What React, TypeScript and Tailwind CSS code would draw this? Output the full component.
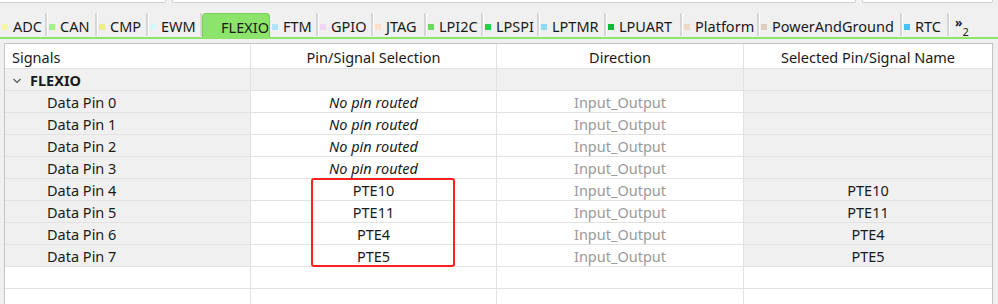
import React from "react";

type Tab = { label: string; sq: string; w: string; active?: boolean };

const tabs: Tab[] = [
  { label: "ADC", sq: "bg-[#f6f6a0]", w: "w-[47px]" },
  { label: "CAN", sq: "bg-[#a6f08a]", w: "w-[50px]" },
  { label: "CMP", sq: "bg-[#eeee7c]", w: "w-[51px]" },
  { label: "EWM", sq: "bg-[#d4f8f8]", w: "w-[54px]" },
  { label: "FLEXIO", sq: "bg-[#8de46a]", w: "w-[68px]", active: true },
  { label: "FTM", sq: "bg-[#b2e2fa]", w: "w-[48px]" },
  { label: "GPIO", sq: "bg-[#f2d4f6]", w: "w-[55px]" },
  { label: "JTAG", sq: "bg-[#fde0c8]", w: "w-[53px]" },
  { label: "LPI2C", sq: "bg-[#66dd55]", w: "w-[57px]" },
  { label: "LPSPI", sq: "bg-[#22d04a]", w: "w-[56px]" },
  { label: "LPTMR", sq: "bg-[#90d8f8]", w: "w-[67px]" },
  { label: "LPUART", sq: "bg-[#10b83a]", w: "w-[76px]" },
  { label: "Platform", sq: "bg-[#eed8c4]", w: "w-[77px]" },
  { label: "PowerAndGround", sq: "bg-[#e2ccbe]", w: "w-[143px]" },
  { label: "RTC", sq: "bg-[#4cc0f4]", w: "w-[47px]" },
];

type Row = { name: string; pin: string; sel: string };

const rows: Row[] = [
  { name: "Data Pin 0", pin: "", sel: "" },
  { name: "Data Pin 1", pin: "", sel: "" },
  { name: "Data Pin 2", pin: "", sel: "" },
  { name: "Data Pin 3", pin: "", sel: "" },
  { name: "Data Pin 4", pin: "PTE10", sel: "PTE10" },
  { name: "Data Pin 5", pin: "PTE11", sel: "PTE11" },
  { name: "Data Pin 6", pin: "PTE4", sel: "PTE4" },
  { name: "Data Pin 7", pin: "PTE5", sel: "PTE5" },
];

const grid = "grid grid-cols-[246px_246px_247px_1fr]";
const cell = "h-[22px] pt-[2px] border-b border-r border-[#e2e2e2] flex items-center";
const head = "h-[25px] pt-[3px] border-b border-[#e2e2e2] flex items-center";

export default function App() {
  return (
    <div className="relative w-[998px] h-[304px] overflow-hidden bg-[#f0f0f0] text-[14.5px] text-[#1a1a1a] font-['Noto_Sans',sans-serif] leading-none">
      {/* bottoms of the panels above */}
      <div className="flex h-[13px] items-start">
        <div className="w-[166px] h-[3px] bg-white border-b border-r border-[#cfcfcf] rounded-br-[2px]" />
        <div className="ml-[6px] w-[684px] h-[3px] bg-white border-b border-x border-[#cfcfcf] rounded-b-[2px]" />
        <div className="ml-[6px] w-[131px] h-[3px] bg-white border-b border-x border-[#cfcfcf] rounded-b-[2px]" />
      </div>

      {/* tab strip */}
      <div className="flex h-[24px] items-stretch">
        {tabs.map((t) =>
          t.active ? (
            <div
              key={t.label}
              className={`${t.w} flex items-center pt-[4px] pl-[6px] bg-[#8de46a] border border-b-0 border-[#7ccf5c] rounded-t-[4px]`}
            >
              <span className={`w-[6px] h-[6px] mr-[10px] ${t.sq}`} />
              <span>{t.label}</span>
            </div>
          ) : (
            <div
              key={t.label}
              className={`${t.w} flex items-center pt-[4px] pl-[2px] border-r-2 border-r-[#d6d6d6] shadow-[1px_0_0_#ffffff] mb-[1px]`}
            >
              <span className={`w-[6px] h-[6px] mr-[5px] ${t.sq}`} />
              <span>{t.label}</span>
            </div>
          )
        )}
        <div className="flex items-start pl-[6px] pt-[4px] text-[12px]">
          <span className="font-bold">»</span>
          <span className="mt-[9px] text-[11px]">2</span>
        </div>
      </div>
      <div className="h-[2px] bg-[#8de46a]" />

      {/* signals table */}
      <div className="mt-[4px] ml-[4px] w-[989px] border border-[#c4c4c4] bg-white">
        <div className={grid}>
          <div className={`${head} border-r pl-[7px]`}>Signals</div>
          <div className={`${head} border-r justify-center`}>Pin/Signal Selection</div>
          <div className={`${head} border-r justify-center`}>Direction</div>
          <div className={`${head} justify-center`}>Selected Pin/Signal Name</div>
        </div>

        <div className={`${grid} bg-[#f0f0f0]`}>
          <div className={`${cell} pl-[8px] font-bold`}>
            <svg width="8" height="6" viewBox="0 0 8 6" className="mr-[9px]">
              <polyline points="0.5,1 4,4.5 7.5,1" fill="none" stroke="#555" strokeWidth="1.2" />
            </svg>
            FLEXIO
          </div>
          <div className={cell} />
          <div className={cell} />
          <div className={`${cell} border-r-0`} />
        </div>

        {rows.map((r) => (
          <div key={r.name} className={grid}>
            <div className={`${cell} pl-[42px] bg-[#f0f0f0]`}>{r.name}</div>
            <div className={`${cell} justify-center ${r.pin ? "" : "italic"}`}>{r.pin || "No pin routed"}</div>
            <div className={`${cell} justify-center text-[#9a9a9a]`}>Input_Output</div>
            <div className={`${cell} border-r-0 justify-center bg-[#f0f0f0]`}>{r.sel}</div>
          </div>
        ))}

        {[0, 1].map((i) => (
          <div key={i} className={grid}>
            <div className={cell} />
            <div className={cell} />
            <div className={cell} />
            <div className={`${cell} border-r-0`} />
          </div>
        ))}
      </div>

      {/* annotation */}
      <div className="absolute left-[311px] top-[178px] w-[144px] h-[89px] border-2 border-[#ff1f1f] rounded-[3px]" />
    </div>
  );
}
